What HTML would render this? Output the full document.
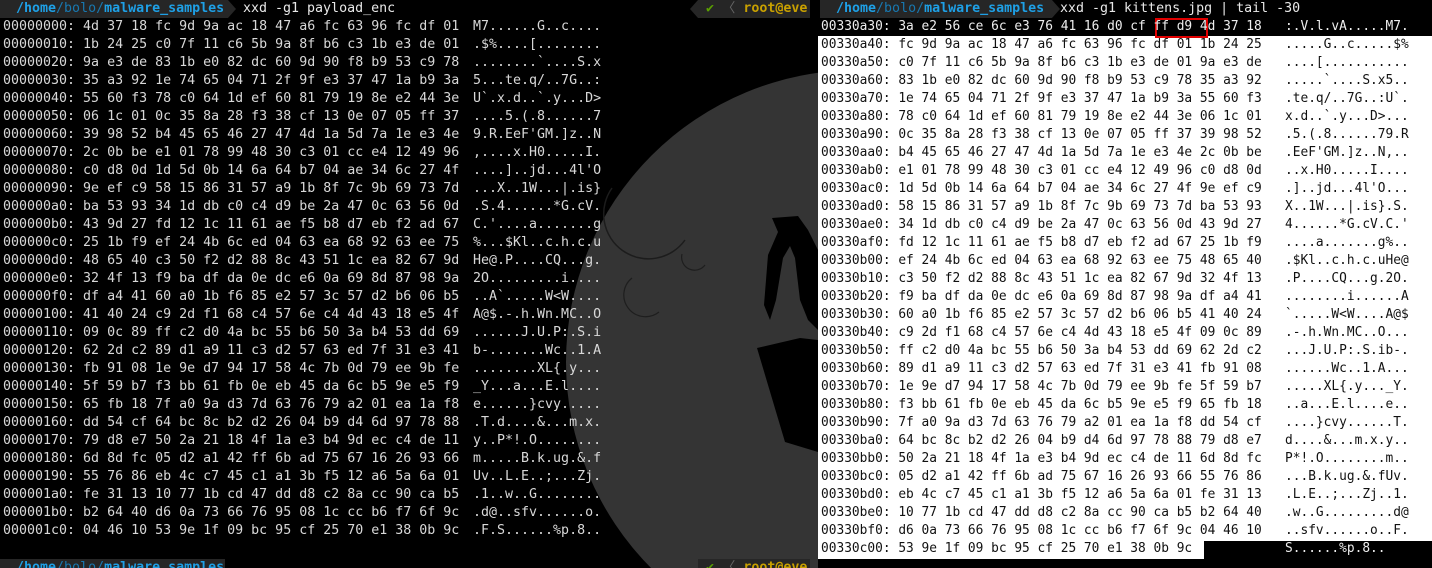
<!DOCTYPE html>
<html><head><meta charset="utf-8"><style>
html,body{margin:0;padding:0;background:#000;}
body{width:1432px;height:568px;overflow:hidden;position:relative;font-family:"DejaVu Sans Mono","Liberation Mono",monospace;font-size:13.3px;}
.r{position:absolute;height:18px;line-height:18px;white-space:pre;}
.rs{font-size:12.85px;}
.lp{color:#d8d8d8;}
.bar{position:absolute;height:18px;line-height:18px;background:#262626;white-space:pre;}
.b1{color:#1ea0e6;font-weight:bold}
.b2{color:#1878b0}
.cmd{color:#e8e8e8}
.y{color:#c8a000;font-weight:bold}
.g{color:#5aa000}
#wrap{position:absolute;left:0;top:0;width:1432px;height:568px;overflow:hidden}
</style></head><body><div id="wrap">
<svg width="818" height="568" style="position:absolute;left:0;top:0">
<circle cx="858" cy="362" r="292" fill="#343434"/>
<path d="M612,188 A41,41 0 0,0 685,240" fill="none" stroke="#1c1c1c" stroke-width="1.5"/>
<path d="M682,254 A13,13 0 0,0 705,265" fill="none" stroke="#1e1e1e" stroke-width="1.2"/>
<path d="M632,278 A19,19 0 0,0 659,312" fill="none" stroke="#1e1e1e" stroke-width="1.2"/>
<path d="M772,218 L798,216 L808,230 L818,250 L818,330 L808,320 L800,300 L795,258 L790,246 L783,258 L776,300 L770,320 L764,305 L768,255 L778,232 Z" fill="#000"/>
<path d="M757,348 L800,338 L818,340 L818,452 L785,442 Z" fill="#000"/>
</svg>
<div class="bar" style="left:0;top:0;width:228px">  <span class="b1">/home</span><span class="b2">/bolo/</span><span class="b1">malware_samples</span></div>
<div style="position:absolute;left:228px;top:0;width:0;height:0;border-top:9px solid transparent;border-bottom:9px solid transparent;border-left:8px solid #262626"></div>
<div class="r cmd" style="left:243px;top:0">xxd -g1 payload_enc</div>
<div style="position:absolute;left:690px;top:0;width:0;height:0;border-top:9px solid transparent;border-bottom:9px solid transparent;border-right:8px solid #262626"></div>
<div class="bar" style="left:698px;top:0;width:112px"><span class="g"> ✔</span> <span style="color:#666">〈</span> <span class="y">root@eve</span></div>
<div class="bar" style="left:0;top:559px;width:225px">  <span class="b1">/home</span><span class="b2">/bolo/</span><span class="b1">malware_samples</span></div>
<div class="bar" style="left:698px;top:559px;width:112px"><span class="g"> ✔</span> <span style="color:#666">〈</span> <span class="y">root@eve</span></div>

<div id="L"></div>
<div style="position:absolute;left:818px;top:36px;width:614px;height:505px;background:#fff"></div>
<div style="position:absolute;left:818px;top:541px;width:386px;height:18px;background:#fff"></div>
<div class="bar" style="left:820px;top:0;width:232px">  <span class="b1">/home</span><span class="b2">/bolo/</span><span class="b1">malware_samples</span></div>
<div style="position:absolute;left:1052px;top:0;width:0;height:0;border-top:9px solid transparent;border-bottom:9px solid transparent;border-left:8px solid #262626"></div>
<div class="r cmd" style="left:1060px;top:0">xxd -g1 kittens.jpg | tail -30</div>
<div style="position:absolute;left:1155px;top:18px;width:49px;height:16px;border:2px solid #e00000"></div>
<div id="R"></div>
</div>
<script>
var L=[["00000000: 4d 37 18 fc 9d 9a ac 18 47 a6 fc 63 96 fc df 01","M7......G..c...."],
["00000010: 1b 24 25 c0 7f 11 c6 5b 9a 8f b6 c3 1b e3 de 01",".$%....[........"],
["00000020: 9a e3 de 83 1b e0 82 dc 60 9d 90 f8 b9 53 c9 78","........`....S.x"],
["00000030: 35 a3 92 1e 74 65 04 71 2f 9f e3 37 47 1a b9 3a","5...te.q/..7G..:"],
["00000040: 55 60 f3 78 c0 64 1d ef 60 81 79 19 8e e2 44 3e","U`.x.d..`.y...D>"],
["00000050: 06 1c 01 0c 35 8a 28 f3 38 cf 13 0e 07 05 ff 37","....5.(.8......7"],
["00000060: 39 98 52 b4 45 65 46 27 47 4d 1a 5d 7a 1e e3 4e","9.R.EeF'GM.]z..N"],
["00000070: 2c 0b be e1 01 78 99 48 30 c3 01 cc e4 12 49 96",",....x.H0.....I."],
["00000080: c0 d8 0d 1d 5d 0b 14 6a 64 b7 04 ae 34 6c 27 4f","....]..jd...4l'O"],
["00000090: 9e ef c9 58 15 86 31 57 a9 1b 8f 7c 9b 69 73 7d","...X..1W...|.is}"],
["000000a0: ba 53 93 34 1d db c0 c4 d9 be 2a 47 0c 63 56 0d",".S.4......*G.cV."],
["000000b0: 43 9d 27 fd 12 1c 11 61 ae f5 b8 d7 eb f2 ad 67","C.'....a.......g"],
["000000c0: 25 1b f9 ef 24 4b 6c ed 04 63 ea 68 92 63 ee 75","%...$Kl..c.h.c.u"],
["000000d0: 48 65 40 c3 50 f2 d2 88 8c 43 51 1c ea 82 67 9d","He@.P....CQ...g."],
["000000e0: 32 4f 13 f9 ba df da 0e dc e6 0a 69 8d 87 98 9a","2O.........i...."],
["000000f0: df a4 41 60 a0 1b f6 85 e2 57 3c 57 d2 b6 06 b5","..A`.....W<W...."],
["00000100: 41 40 24 c9 2d f1 68 c4 57 6e c4 4d 43 18 e5 4f","A@$.-.h.Wn.MC..O"],
["00000110: 09 0c 89 ff c2 d0 4a bc 55 b6 50 3a b4 53 dd 69","......J.U.P:.S.i"],
["00000120: 62 2d c2 89 d1 a9 11 c3 d2 57 63 ed 7f 31 e3 41","b-.......Wc..1.A"],
["00000130: fb 91 08 1e 9e d7 94 17 58 4c 7b 0d 79 ee 9b fe","........XL{.y..."],
["00000140: 5f 59 b7 f3 bb 61 fb 0e eb 45 da 6c b5 9e e5 f9","_Y...a...E.l...."],
["00000150: 65 fb 18 7f a0 9a d3 7d 63 76 79 a2 01 ea 1a f8","e......}cvy....."],
["00000160: dd 54 cf 64 bc 8c b2 d2 26 04 b9 d4 6d 97 78 88",".T.d....&...m.x."],
["00000170: 79 d8 e7 50 2a 21 18 4f 1a e3 b4 9d ec c4 de 11","y..P*!.O........"],
["00000180: 6d 8d fc 05 d2 a1 42 ff 6b ad 75 67 16 26 93 66","m.....B.k.ug.&.f"],
["00000190: 55 76 86 eb 4c c7 45 c1 a1 3b f5 12 a6 5a 6a 01","Uv..L.E..;...Zj."],
["000001a0: fe 31 13 10 77 1b cd 47 dd d8 c2 8a cc 90 ca b5",".1..w..G........"],
["000001b0: b2 64 40 d6 0a 73 66 76 95 08 1c cc b6 f7 6f 9c",".d@..sfv......o."],
["000001c0: 04 46 10 53 9e 1f 09 bc 95 cf 25 70 e1 38 0b 9c",".F.S......%p.8.."]];
var R=[["00330a30: 3a e2 56 ce 6c e3 76 41 16 d0 cf ff d9 4d 37 18",":.V.l.vA.....M7."],
["00330a40: fc 9d 9a ac 18 47 a6 fc 63 96 fc df 01 1b 24 25",".....G..c.....$%"],
["00330a50: c0 7f 11 c6 5b 9a 8f b6 c3 1b e3 de 01 9a e3 de","....[..........."],
["00330a60: 83 1b e0 82 dc 60 9d 90 f8 b9 53 c9 78 35 a3 92",".....`....S.x5.."],
["00330a70: 1e 74 65 04 71 2f 9f e3 37 47 1a b9 3a 55 60 f3",".te.q/..7G..:U`."],
["00330a80: 78 c0 64 1d ef 60 81 79 19 8e e2 44 3e 06 1c 01","x.d..`.y...D>..."],
["00330a90: 0c 35 8a 28 f3 38 cf 13 0e 07 05 ff 37 39 98 52",".5.(.8......79.R"],
["00330aa0: b4 45 65 46 27 47 4d 1a 5d 7a 1e e3 4e 2c 0b be",".EeF'GM.]z..N,.."],
["00330ab0: e1 01 78 99 48 30 c3 01 cc e4 12 49 96 c0 d8 0d","..x.H0.....I...."],
["00330ac0: 1d 5d 0b 14 6a 64 b7 04 ae 34 6c 27 4f 9e ef c9",".]..jd...4l'O..."],
["00330ad0: 58 15 86 31 57 a9 1b 8f 7c 9b 69 73 7d ba 53 93","X..1W...|.is}.S."],
["00330ae0: 34 1d db c0 c4 d9 be 2a 47 0c 63 56 0d 43 9d 27","4......*G.cV.C.'"],
["00330af0: fd 12 1c 11 61 ae f5 b8 d7 eb f2 ad 67 25 1b f9","....a.......g%.."],
["00330b00: ef 24 4b 6c ed 04 63 ea 68 92 63 ee 75 48 65 40",".$Kl..c.h.c.uHe@"],
["00330b10: c3 50 f2 d2 88 8c 43 51 1c ea 82 67 9d 32 4f 13",".P....CQ...g.2O."],
["00330b20: f9 ba df da 0e dc e6 0a 69 8d 87 98 9a df a4 41","........i......A"],
["00330b30: 60 a0 1b f6 85 e2 57 3c 57 d2 b6 06 b5 41 40 24","`.....W<W....A@$"],
["00330b40: c9 2d f1 68 c4 57 6e c4 4d 43 18 e5 4f 09 0c 89",".-.h.Wn.MC..O..."],
["00330b50: ff c2 d0 4a bc 55 b6 50 3a b4 53 dd 69 62 2d c2","...J.U.P:.S.ib-."],
["00330b60: 89 d1 a9 11 c3 d2 57 63 ed 7f 31 e3 41 fb 91 08","......Wc..1.A..."],
["00330b70: 1e 9e d7 94 17 58 4c 7b 0d 79 ee 9b fe 5f 59 b7",".....XL{.y..._Y."],
["00330b80: f3 bb 61 fb 0e eb 45 da 6c b5 9e e5 f9 65 fb 18","..a...E.l....e.."],
["00330b90: 7f a0 9a d3 7d 63 76 79 a2 01 ea 1a f8 dd 54 cf","....}cvy......T."],
["00330ba0: 64 bc 8c b2 d2 26 04 b9 d4 6d 97 78 88 79 d8 e7","d....&...m.x.y.."],
["00330bb0: 50 2a 21 18 4f 1a e3 b4 9d ec c4 de 11 6d 8d fc","P*!.O........m.."],
["00330bc0: 05 d2 a1 42 ff 6b ad 75 67 16 26 93 66 55 76 86","...B.k.ug.&.fUv."],
["00330bd0: eb 4c c7 45 c1 a1 3b f5 12 a6 5a 6a 01 fe 31 13",".L.E..;...Zj..1."],
["00330be0: 10 77 1b cd 47 dd d8 c2 8a cc 90 ca b5 b2 64 40",".w..G.........d@"],
["00330bf0: d6 0a 73 66 76 95 08 1c cc b6 f7 6f 9c 04 46 10","..sfv......o..F."],
["00330c00: 53 9e 1f 09 bc 95 cf 25 70 e1 38 0b 9c","S......%p.8.."]];
function esc(s){return s.replace(/&/g,"&amp;").replace(/</g,"&lt;");}
var h="";
L.forEach(function(r,i){var t=18+18*i;h+='<div class="r lp" style="left:3px;top:'+t+'px">'+esc(r[0])+'</div><div class="r lp" style="left:473px;top:'+t+'px">'+esc(r[1])+'</div>';});
document.getElementById("L").innerHTML=h;
h="";
R.forEach(function(r,i){var t=18+18*i;var c=(i==0||i==29)?"#eee":"#111";var c1=(i==0)?"#eee":"#111";
h+='<div class="r rs" style="color:'+c1+';left:821px;top:'+t+'px">'+esc(r[0])+'</div><div class="r rs" style="color:'+c+';left:1285px;top:'+t+'px">'+esc(r[1])+'</div>';});
document.getElementById("R").innerHTML=h;
</script>
</body></html>
